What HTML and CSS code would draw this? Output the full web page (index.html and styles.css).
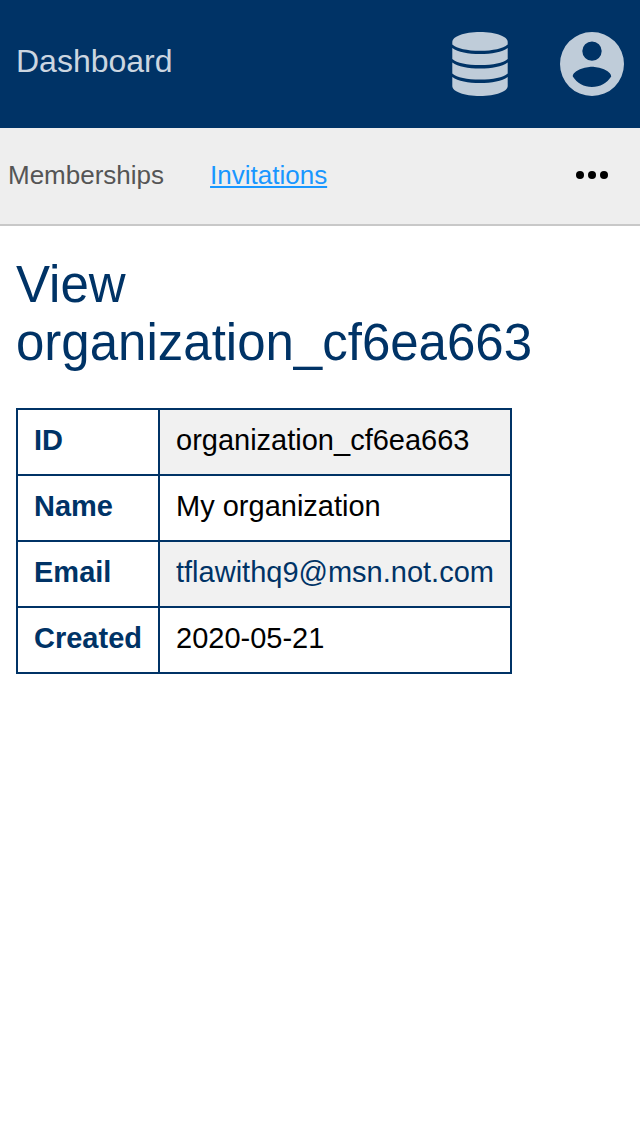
FILE: index.html
```html
<!DOCTYPE html>
<html lang="en">
<head>
<meta charset="utf-8">
<meta name="viewport" content="width=device-width, initial-scale=1">
<title>View organization_cf6ea663</title>
<link rel="stylesheet" href="styles.css">
</head>
<body>
<header class="topbar">
  <a class="topbar-title" href="#">Dashboard</a>
  <div class="topbar-actions">
    <button class="icon-button" type="button" aria-label="Data">
      <svg class="icon" viewBox="0 0 64 64" aria-hidden="true">
        <path d="M4.300 10C4.300 4.500 16 0 32 0S59.700 4.500 59.700 10V12.500C55 16.500 45 18.800 32 18.800S9 16.500 4.300 12.500Z"/>
        <path d="M4.300 16C10 20 20 22 32 22S54 20 59.700 16V27C55 31 45 33 32 33S9 31 4.300 27Z"/>
        <path d="M4.300 30.500C10 34.500 20 36.500 32 36.500S54 34.500 59.700 30.500V41.500C55 45.500 45 47.500 32 47.500S9 45.500 4.300 41.500Z"/>
        <path d="M4.300 45C10 49 20 51 32 51S54 49 59.700 45V54C59.700 59.500 48 64 32 64S4.300 59.500 4.300 54Z"/>
      </svg>
    </button>
    <button class="icon-button" type="button" aria-label="Account">
      <svg class="icon" viewBox="0 0 64 64" aria-hidden="true">
        <path fill-rule="evenodd" d="M32 0a32 32 0 1 0 0 64a32 32 0 1 0 0-64ZM32 9.400a9.700 9.700 0 1 1 0 19.400a9.700 9.700 0 1 1 0-19.400ZM32 55C24 55 17 51 12.800 44.500C13 38.500 25.500 34.800 32 34.800S51 38.500 51.200 44.500C47 51 40 55 32 55Z"/>
      </svg>
    </button>
  </div>
</header>
<nav class="tabs" aria-label="Dashboard sections">
  <a class="tab" href="#">Memberships</a>
  <a class="tab tab-active" href="#" aria-current="page">Invitations</a>
  <button class="more-button" type="button" aria-label="More">
    <svg class="more-icon" viewBox="0 0 32 8" aria-hidden="true">
      <circle cx="4" cy="4" r="4"/><circle cx="16" cy="4" r="4"/><circle cx="28" cy="4" r="4"/>
    </svg>
  </button>
</nav>
<main class="content">
  <h1 class="title">View organization_cf6ea663</h1>
  <table class="details">
    <tbody>
      <tr><th scope="row">ID</th><td>organization_cf6ea663</td></tr>
      <tr><th scope="row">Name</th><td>My organization</td></tr>
      <tr><th scope="row">Email</th><td><a class="email" href="mailto:tflawithq9@msn.not.com">tflawithq9@msn.not.com</a></td></tr>
      <tr><th scope="row">Created</th><td>2020-05-21</td></tr>
    </tbody>
  </table>
</main>
</body>
</html>
```
FILE: styles.css
```css
* {
  box-sizing: border-box;
}

body {
  margin: 0;
  background: #fff;
  color: #000;
  font-family: "Liberation Sans", Arial, sans-serif;
}

button {
  padding: 0;
  border: 0;
  background: none;
  cursor: pointer;
}

.topbar {
  display: flex;
  justify-content: space-between;
  align-items: flex-start;
  padding: 32px 16px;
  background: #036;
}

.topbar-title {
  color: #ccd6e0;
  font-size: 32px;
  line-height: 58px;
  text-decoration: none;
}

.topbar-actions {
  display: flex;
  gap: 48px;
}

.icon-button,
.icon {
  display: block;
  width: 64px;
  height: 64px;
}

.icon {
  fill: #bfccd9;
}

.tabs {
  display: flex;
  align-items: center;
  gap: 46px;
  padding: 31px 32px 33px 8px;
  border-bottom: 2px solid #c8c8c8;
  background: #eee;
}

.tab {
  color: #555;
  font-size: 26px;
  line-height: 32px;
  text-decoration: none;
}

.tab-active {
  color: #1997ff;
  text-decoration: underline;
}

.more-button {
  margin-left: auto;
}

.more-icon {
  display: block;
  width: 32px;
  height: 8px;
}

.content {
  padding: 30px 16px;
}

.title {
  margin: 0 0 36px;
  color: #036;
  font-size: 51px;
  font-weight: 400;
  line-height: 58px;
}

.details {
  border-collapse: collapse;
  font-size: 29px;
  line-height: 32px;
}

.details th,
.details td {
  padding: 14px 16px 18px;
  border: 2px solid #036;
  text-align: left;
}

.details th {
  color: #036;
}

.details tr:nth-child(odd) td {
  background: #f1f1f1;
}

.email {
  color: #036;
  text-decoration: none;
}
```
